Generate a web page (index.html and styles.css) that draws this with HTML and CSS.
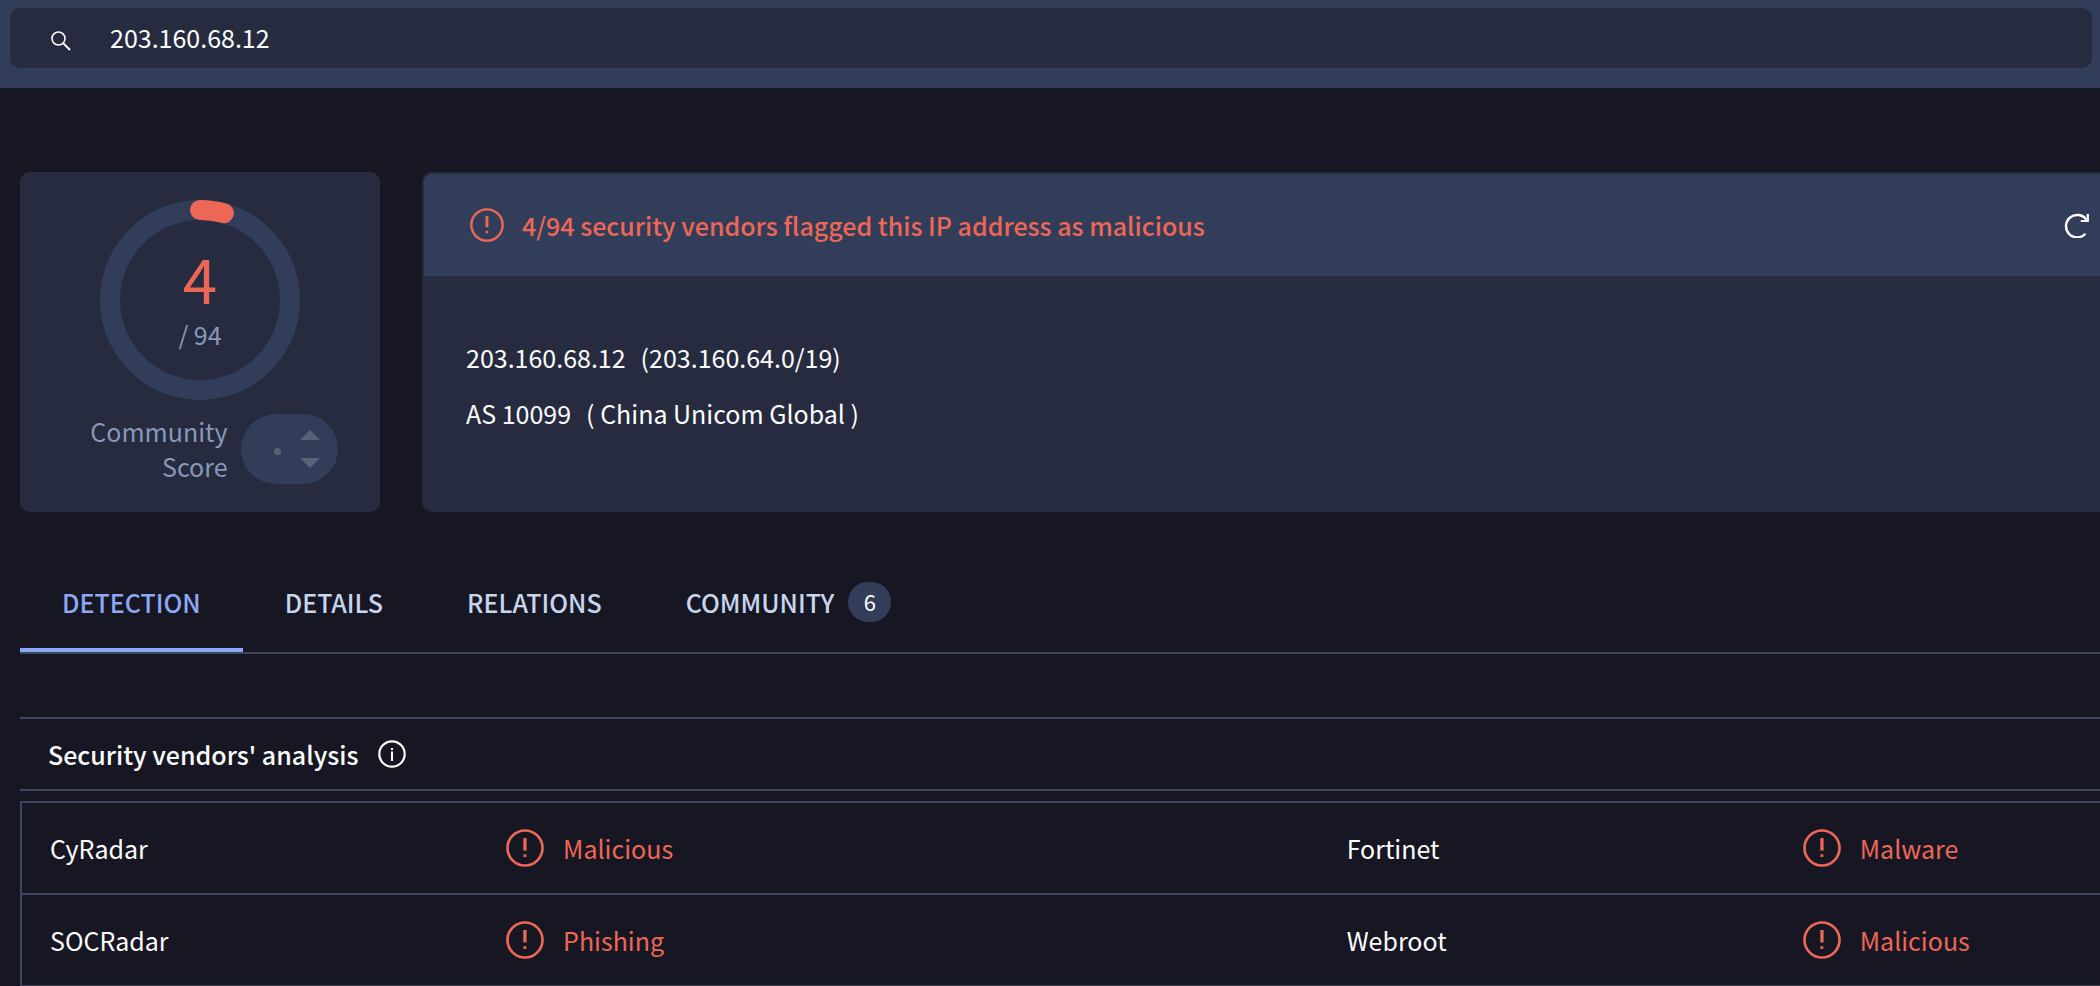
FILE: index.html
```html
<!DOCTYPE html>
<html lang="en">
<head>
<meta charset="utf-8">
<title>203.160.68.12 - IP address report</title>
<link rel="stylesheet" href="styles.css">
</head>
<body>
<svg class="sprite" aria-hidden="true">
  <symbol id="alert" viewBox="0 0 38 38">
    <circle cx="19" cy="19" r="17.5" fill="none" stroke="currentColor" stroke-width="2.7"/>
    <path d="M17.3 9h3.3v12.4h-3.3zM17.5 25.3h2.8v2.8h-2.8z" fill="currentColor"/>
  </symbol>
</svg>
<header class="topbar">
  <label class="search">
    <svg class="search-icon" viewBox="0 0 20 20" aria-hidden="true"><circle cx="7.5" cy="7.5" r="6.5" fill="none" stroke="#fff" stroke-width="1.6"/><path d="M12 12l7 7" stroke="#fff" stroke-width="2"/></svg>
    <input class="search-input" type="text" value="203.160.68.12" aria-label="Search">
  </label>
</header>
<main class="page">
  <section class="summary">
    <div class="score-card">
      <div class="ring">
        <svg class="ring-art" viewBox="0 0 200 200" aria-hidden="true">
          <circle cx="100" cy="100" r="90" fill="none" stroke="#323d59" stroke-width="20"/>
          <path d="M100 10A90 90 0 0 1 123.9 13.2" fill="none" stroke="#ed6757" stroke-width="20" stroke-linecap="round"/>
        </svg>
        <div class="ring-text">
          <span class="ring-count">4</span>
          <span class="ring-total">/ 94</span>
        </div>
      </div>
      <div class="community">
        <span class="community-label">Community Score</span>
        <div class="votes">
          <span class="votes-dot"></span>
          <div class="votes-arrows">
            <button class="vote" type="button" aria-label="Vote up"><svg viewBox="0 0 20 10" aria-hidden="true"><path d="M0 10L10 0l10 10z" fill="#5c6275"/></svg></button>
            <button class="vote" type="button" aria-label="Vote down"><svg viewBox="0 0 20 10" aria-hidden="true"><path d="M0 0h20L10 10z" fill="#5c6275"/></svg></button>
          </div>
        </div>
      </div>
    </div>
    <div class="info-card">
      <div class="info-head">
        <svg class="info-alert" aria-hidden="true"><use href="#alert"/></svg>
        <strong class="info-title">4/94 security vendors flagged this IP address as malicious</strong>
        <button class="refresh" type="button" aria-label="Reanalyze"><svg viewBox="0 0 26 26" aria-hidden="true"><path d="M21.4 21.8A11.2 11.2 0 1 1 22.3 7.6" fill="none" stroke="#fff" stroke-width="2.4"/><path d="M23.8 2v7h-7" fill="none" stroke="#fff" stroke-width="2.2"/></svg></button>
      </div>
      <div class="info-body">
        <p class="info-line"><span>203.160.68.12</span><span>(203.160.64.0/19)</span></p>
        <p class="info-line"><span>AS 10099</span><span>( China Unicom Global )</span></p>
      </div>
    </div>
  </section>
  <nav class="tabs">
    <a class="tab tab-active" href="#detection">DETECTION</a>
    <a class="tab" href="#details">DETAILS</a>
    <a class="tab" href="#relations">RELATIONS</a>
    <a class="tab" href="#community">COMMUNITY<span class="badge">6</span></a>
  </nav>
  <section class="analysis" id="detection">
    <div class="analysis-head">
      <h2 class="analysis-title">Security vendors' analysis</h2>
      <svg class="analysis-info" viewBox="0 0 28 28" aria-hidden="true"><circle cx="14" cy="14" r="12.7" fill="none" stroke="#fff" stroke-width="2.2"/><path d="M13 11.5h2V21h-2zM13 8h2v2h-2z" fill="#fff"/></svg>
    </div>
    <table class="vendors">
      <tbody>
        <tr><td class="vendor">CyRadar</td><td class="verdict"><span class="flag"><svg class="flag-icon" aria-hidden="true"><use href="#alert"/></svg>Malicious</span></td><td class="vendor">Fortinet</td><td><span class="flag"><svg class="flag-icon" aria-hidden="true"><use href="#alert"/></svg>Malware</span></td></tr>
        <tr><td>SOCRadar</td><td><span class="flag"><svg class="flag-icon" aria-hidden="true"><use href="#alert"/></svg>Phishing</span></td><td>Webroot</td><td><span class="flag"><svg class="flag-icon" aria-hidden="true"><use href="#alert"/></svg>Malicious</span></td></tr>
      </tbody>
    </table>
  </section>
</main>
</body>
</html>
```
FILE: styles.css
```css
* { box-sizing: border-box; }
body {
  margin: 0;
  background: #171723;
  color: #fff;
  font: 25px/35px "Noto Sans CJK SC", "Noto Sans", sans-serif;
}
svg { display: block; }
button { padding: 0; border: 0; background: none; cursor: pointer; }
.sprite { position: absolute; width: 0; height: 0; }

.topbar { padding: 8px 8px 20px 10px; background: #323d59; }
.search {
  display: flex;
  align-items: center;
  gap: 39px;
  height: 60px;
  padding: 0 41px 2px;
  border-radius: 10px;
  background: #262b3f;
}
.search-icon { flex: none; width: 20px; height: 20px; margin-top: 7px; }
.search-input {
  flex: 1;
  min-width: 0;
  padding: 0;
  border: 0;
  outline: 0;
  background: none;
  color: inherit;
  font: inherit;
}

.page { padding: 84px 0 0 20px; }
.summary { display: flex; gap: 42px; }
.score-card {
  display: flex;
  flex: none;
  flex-direction: column;
  align-items: center;
  width: 360px;
  padding: 28px 0;
  border-radius: 10px;
  background: #262b3f;
}
.ring { display: grid; width: 200px; height: 200px; }
.ring-art, .ring-text { grid-area: 1 / 1; }
.ring-text {
  display: flex;
  flex-direction: column;
  align-items: center;
  padding-top: 37px;
}
.ring-count { color: #ed6757; font-size: 62px; line-height: 80px; }
.ring-total { color: #8b98b8; }
.community { display: flex; gap: 13px; margin: 14px 0 0 24px; }
.community-label { width: 141px; color: #8b98b8; text-align: right; }
.votes {
  display: flex;
  align-items: center;
  gap: 19px;
  width: 97px;
  height: 70px;
  padding-left: 33px;
  border-radius: 35px;
  background: #323d59;
}
.votes-dot { width: 7px; height: 7px; margin-top: 5px; border-radius: 50%; background: #5c6275; }
.votes-arrows { display: grid; gap: 18px; }
.vote { width: 20px; height: 10px; }

.info-card {
  flex: 1;
  min-width: 0;
  border: 2px solid #262b3f;
  border-right: 0;
  border-radius: 10px 0 0 10px;
  background: #262b3f;
}
.info-head {
  display: flex;
  align-items: center;
  height: 102px;
  padding: 0 10px 0 46px;
  border-top-left-radius: 8px;
  background: #323d59;
}
.info-alert { width: 34px; height: 34px; margin-right: 18px; color: #ed6757; }
.info-title { flex: 1; color: #ed6757; font-weight: 500; }
.refresh { width: 26px; height: 26px; }
.info-body { display: grid; gap: 21px; padding: 64px 42px; }
.info-line { display: flex; gap: 15px; margin: 0; }

.tabs {
  display: flex;
  margin-top: 42px;
  border-bottom: 2px solid #3d4762;
}
.tab {
  display: flex;
  align-items: center;
  gap: 14px;
  height: 98px;
  padding: 2px 42px 0;
  border-bottom: 4px solid transparent;
  color: #c7d5ed;
  font-weight: 500;
  text-decoration: none;
}
.tab-active { border-color: #8ea8f5; color: #8ea8f5; }
.badge {
  width: 43px;
  height: 40px;
  border-radius: 20px;
  background: #323d59;
  color: #fff;
  font-size: 22px;
  font-weight: 400;
  line-height: 38px;
  text-align: center;
}

.analysis { margin-top: 63px; }
.analysis-head {
  display: flex;
  align-items: center;
  gap: 20px;
  height: 74px;
  padding-left: 28px;
  border: solid #3d4762;
  border-width: 2px 0;
}
.analysis-title { margin: 0; font-size: 25px; font-weight: 500; }
.analysis-info { width: 28px; height: 28px; }
.vendors {
  width: 100%;
  margin-top: 10px;
  border: solid #3d4762;
  border-width: 2px 0 0 2px;
  border-spacing: 0;
  table-layout: fixed;
}
.vendor { width: 21.95%; }
.verdict { width: 40.45%; }
.vendors td { height: 92px; padding: 0 28px; border-bottom: 2px solid #3d4762; }
.flag { display: flex; align-items: center; gap: 19px; color: #ed6757; }
.flag-icon { flex: none; width: 38px; height: 38px; }
```
